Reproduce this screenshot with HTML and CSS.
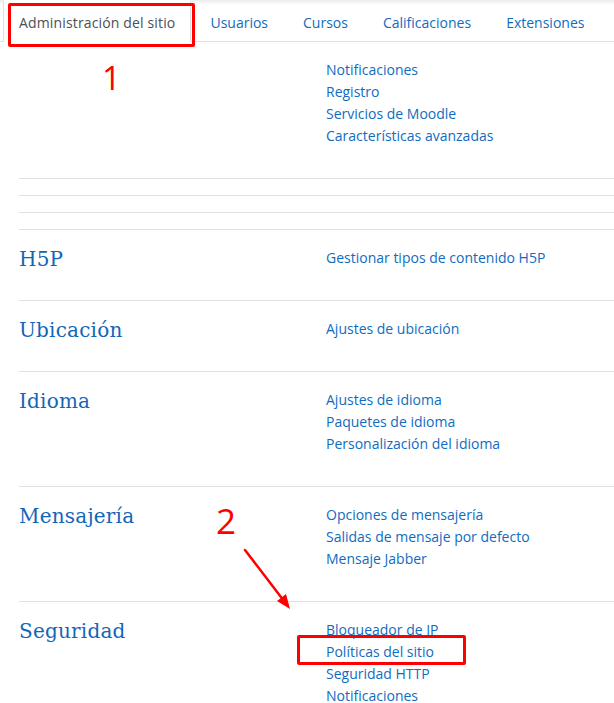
FILE: index.html
```html
<!DOCTYPE html>
<html lang="es">
<head>
<meta charset="utf-8">
<title>Administración del sitio</title>
<link rel="stylesheet" href="styles.css">
</head>
<body>
<div class="page">
  <nav class="tabs">
    <ul class="tab-list">
      <li class="tab active"><a href="#">Administración del sitio</a></li>
      <li class="tab"><a href="#">Usuarios</a></li>
      <li class="tab"><a href="#">Cursos</a></li>
      <li class="tab"><a href="#">Calificaciones</a></li>
      <li class="tab"><a href="#">Extensiones</a></li>
    </ul>
  </nav>

  <div class="admin">
    <div class="row first">
      <div class="head"></div>
      <ul class="links">
        <li><a href="#">Notificaciones</a></li>
        <li><a href="#">Registro</a></li>
        <li><a href="#">Servicios de Moodle</a></li>
        <li><a href="#">Características avanzadas</a></li>
      </ul>
    </div>
    <div class="row empty"></div>
    <div class="row empty"></div>
    <div class="row empty"></div>
    <div class="row">
      <h4 class="head">H5P</h4>
      <ul class="links">
        <li><a href="#">Gestionar tipos de contenido H5P</a></li>
      </ul>
    </div>
    <div class="row">
      <h4 class="head">Ubicación</h4>
      <ul class="links">
        <li><a href="#">Ajustes de ubicación</a></li>
      </ul>
    </div>
    <div class="row">
      <h4 class="head">Idioma</h4>
      <ul class="links">
        <li><a href="#">Ajustes de idioma</a></li>
        <li><a href="#">Paquetes de idioma</a></li>
        <li><a href="#">Personalización del idioma</a></li>
      </ul>
    </div>
    <div class="row">
      <h4 class="head">Mensajería</h4>
      <ul class="links">
        <li><a href="#">Opciones de mensajería</a></li>
        <li><a href="#">Salidas de mensaje por defecto</a></li>
        <li><a href="#">Mensaje Jabber</a></li>
      </ul>
    </div>
    <div class="row">
      <h4 class="head">Seguridad</h4>
      <ul class="links">
        <li><a href="#">Bloqueador de IP</a></li>
        <li class="marked"><a href="#">Políticas del sitio</a><span class="mark-box"></span></li>
        <li><a href="#">Seguridad HTTP</a></li>
        <li><a href="#">Notificaciones</a></li>
      </ul>
    </div>
  </div>

  <div class="mark-tab"></div>
  <div class="num num-1">1</div>
  <div class="num num-2">2</div>
  <svg class="arrow" width="60" height="70" viewBox="0 0 60 70" aria-hidden="true">
    <line x1="5" y1="5" x2="44" y2="56" stroke="#ff0000" stroke-width="2.5" stroke-linecap="round"/>
    <polygon points="50,64 37,56 46,49" fill="#ff0000"/>
  </svg>
</div>
</body>
</html>
```

FILE: styles.css
```css
html, body {
  margin: 0;
  padding: 0;
  background: #ffffff;
}

body {
  font-family: "Open Sans", "Noto Sans", "Liberation Sans", sans-serif;
  font-size: 14px;
  color: #1d2125;
  overflow: hidden;
}

.page {
  position: relative;
  width: 614px;
  min-height: 703px;
}

a {
  color: #0f6cbf;
  text-decoration: none;
}

/* Tabs */
.tabs {
  background: linear-gradient(to bottom, #ececec 0, #ffffff 5px);
}

.tab-list {
  list-style: none;
  margin: 0;
  padding: 0 0 0 3px;
  display: flex;
  gap: 3px;
  border-bottom: 1px solid #dee2e6;
  height: 41px;
  box-sizing: content-box;
}

.tab {
  padding: 11px 15px 9px;
  line-height: 21px;
  border: 1px solid transparent;
  border-bottom: none;
  margin-bottom: -1px;
}

.tab.active {
  background: #ffffff;
  border-color: #dee2e6;
  border-top-color: transparent;
  padding-bottom: 10px;
}

.tab.active a {
  color: #495057;
  letter-spacing: 0.15px;
}

/* Admin rows */
.admin {
  padding-left: 19px;
}

.row {
  display: flex;
  border-top: 1px solid #dee2e6;
  padding-top: 16px;
}

.row.first {
  border-top: none;
}

.head {
  width: 307px;
  flex: none;
  margin: 0;
  font-family: "DejaVu Serif", "Liberation Serif", serif;
  font-weight: normal;
  font-size: 20px;
  line-height: 26px;
  color: #1266b8;
  letter-spacing: 0.2px;
}

.links {
  list-style: none;
  margin: 0 0 31px;
  padding: 1px 0 0;
  line-height: 22px;
}

.links li {
  white-space: nowrap;
}

.marked {
  position: relative;
}

/* Annotations (overlay) */
.mark-box {
  position: absolute;
  left: -29px;
  top: -6px;
  width: 169px;
  height: 30px;
  box-sizing: border-box;
  border: 3px solid #ff0000;
  border-radius: 2px;
}

.mark-tab {
  position: absolute;
  left: 8px;
  top: 3px;
  width: 187px;
  height: 44px;
  box-sizing: border-box;
  border: 3px solid #ff0000;
  border-radius: 2px;
}

.num {
  position: absolute;
  color: #ff0000;
  font-family: "Open Sans", "Noto Sans", sans-serif;
  line-height: 1;
}

.num-1 {
  left: 102px;
  top: 61px;
  font-size: 33px;
}

.num-2 {
  left: 216px;
  top: 503px;
  font-size: 35px;
}

.arrow {
  position: absolute;
  left: 240px;
  top: 545px;
}
```
